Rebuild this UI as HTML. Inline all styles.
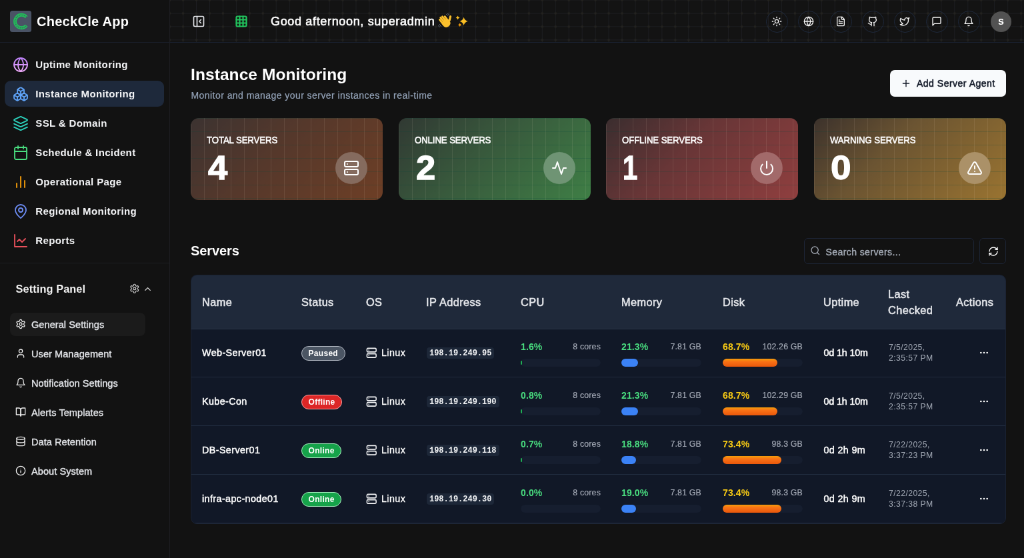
<!DOCTYPE html>
<html lang="en">
<head>
<meta charset="utf-8">
<title>CheckCle App - Instance Monitoring</title>
<style>
*{box-sizing:border-box;margin:0;padding:0}
html,body{width:1024px;height:558px;overflow:hidden;background:#121212}
body{font-family:"Liberation Sans",sans-serif;color:#fff;-webkit-font-smoothing:antialiased}
#app{position:absolute;left:0;top:0;width:1536px;height:837px;transform:scale(0.666667);transform-origin:0 0;will-change:transform;overflow:hidden}
svg{display:block;fill:none;stroke:currentColor;stroke-width:2;stroke-linecap:round;stroke-linejoin:round}
.abs{position:absolute}
/* ---------- sidebar ---------- */
#side{position:absolute;left:0;top:0;width:255px;height:837px;background:#121212;border-right:1px solid #1e1f23}
#side .head{position:absolute;left:0;top:0;width:254px;height:64px;border-bottom:1px solid #1a1f2a}
#logo{position:absolute;left:15px;top:16px;width:32px;height:32px;border-radius:3.5px;background:#4a5365;color:#22c55e}
#brand{position:absolute;left:55px;top:19.8px;font-size:20px;font-weight:700;line-height:24px;letter-spacing:.28px;white-space:nowrap}
.nav{position:absolute;left:6.8px;width:239.2px;height:39.5px;margin-top:.5px;border-radius:9px;white-space:nowrap}
.nav.on{background:#1e293b}
.nav svg{position:absolute;left:12px;top:8px;width:24px;height:24px;stroke-width:1.8}
.nav span{position:absolute;left:46.5px;top:8.8px;font-size:15px;line-height:24px;font-weight:700;letter-spacing:.36px;color:#f3f4f6}
#side .sep{position:absolute;left:0;top:394px;width:254px;height:1px;background:#1d1f24}
#sp{position:absolute;left:23.5px;top:421px;font-size:16.3px;line-height:24px;font-weight:700;letter-spacing:.12px;color:#f1f1f1}
.set{position:absolute;left:15px;width:203px;height:35px;border-radius:8px;white-space:nowrap;color:#e5e7eb}
.set.on{background:#1b1b1b}
.set svg{position:absolute;left:8.3px;top:9.3px;width:16px;height:16px;stroke-width:1.9;color:#f0f0f0}
.set span{position:absolute;left:32px;top:6.9px;font-size:14.5px;line-height:22px;font-weight:400;letter-spacing:.08px;-webkit-text-stroke:.35px currentColor}
/* ---------- header ---------- */
#top{position:absolute;left:255px;top:0;width:1281px;height:64px;border-bottom:1px solid #1b2230;
 background-color:#131313;
 background-image:radial-gradient(circle at 2.5px 2.5px,#24231f 1.2px,transparent 2.3px),linear-gradient(to right,#1d1e22 1px,transparent 1px),linear-gradient(to bottom,#1d1e22 1px,transparent 1px);
 background-size:19.96px 19.96px;background-position:-2.9px -2.5px,-.9px -.5px,-.9px -.5px}
#greet{position:absolute;left:151px;top:19px;font-size:18px;line-height:26px;font-weight:400;letter-spacing:.66px;white-space:nowrap;-webkit-text-stroke:.6px #fff}
.hb{position:absolute;top:15.5px;width:33px;height:33px;margin-left:-.5px;border-radius:50%;border:1px solid #1f2a3d;color:#f5f5f5}
.hb svg{position:absolute;left:7.5px;top:7.5px;width:16px;height:16px}
#ava{position:absolute;left:1231px;top:16.5px;width:31px;height:31px;border-radius:50%;background:#525252;text-align:center;font-size:16px;line-height:29px;font-weight:700}
/* ---------- main ---------- */
#title{position:absolute;left:286px;top:96.3px;font-size:24.5px;line-height:32px;font-weight:700;letter-spacing:.08px;white-space:nowrap}
#sub{position:absolute;left:286.5px;top:132.8px;font-size:14px;line-height:20px;color:#94a3b8;letter-spacing:.445px;-webkit-text-stroke:.2px #94a3b8;white-space:nowrap}
#add{position:absolute;left:1335px;top:105px;width:174px;height:40px;border-radius:7px;background:#f8fafc;color:#111827}
#add svg{position:absolute;left:16px;top:12px;width:16px;height:16px}
#add span{position:absolute;left:40px;top:9px;font-size:14px;line-height:22px;font-weight:400;-webkit-text-stroke:.55px #111827;letter-spacing:.5px;white-space:nowrap}
.card{position:absolute;top:177px;width:288px;height:123px;border-radius:12px;overflow:hidden}
.card:before{content:"";position:absolute;inset:0;
 background-image:linear-gradient(to right,rgba(255,235,210,.09) 1px,transparent 1px),linear-gradient(to bottom,rgba(0,70,60,.2) 1px,transparent 1px);
 background-size:20px 20px}
.card .lb{position:absolute;left:24px;top:22.7px;font-size:14.3px;line-height:20px;font-weight:400;letter-spacing:-.1px;white-space:nowrap;-webkit-text-stroke:.55px #fff;transform:scaleX(.923);transform-origin:0 0}
.card .num{position:absolute;left:25.5px;top:49.4px;font-size:50px;line-height:52px;font-weight:700;-webkit-text-stroke:1.3px #fff;transform:scaleX(1.05);transform-origin:0 0}
.card .ic{position:absolute;left:216.5px;top:50.8px;width:48px;height:48px;border-radius:50%;color:#fff}
.card .ic svg{position:absolute;left:12px;top:12px;width:24px;height:24px}
#sv{position:absolute;left:286px;top:361.8px;font-size:20px;line-height:28px;font-weight:700;letter-spacing:-.1px}
#search{position:absolute;left:1206px;top:357px;width:255px;height:39px;border:1px solid #1e2637;border-radius:6px;color:#9ca3af}
#search svg{position:absolute;left:7.5px;top:10px;width:15.5px;height:15.5px;color:#a7adb8}
#search span{position:absolute;left:31.5px;top:9.6px;font-size:14px;line-height:20px;letter-spacing:.42px;white-space:nowrap;color:#a9b0bb;-webkit-text-stroke:.35px #a9b0bb}
#refresh{position:absolute;left:1469px;top:357px;width:40px;height:39px;border:1px solid #1e2637;border-radius:6px}
#refresh svg{position:absolute;left:12px;top:11px;width:16px;height:16px}
/* ---------- table ---------- */
#tbl{position:absolute;left:286px;top:412px;width:1223px;height:373.5px;border-radius:9px;background:#111827;border:1px solid #1b2333;overflow:hidden}
#th{position:absolute;left:0;top:0;width:1223px;height:80.5px;background:#1f293a;border-bottom:1px solid #2a3549}
#th span{position:absolute;font-size:16.3px;line-height:24px;font-weight:400;color:#e5e7eb;letter-spacing:.42px;margin-top:.4px;-webkit-text-stroke:.55px #e5e7eb;white-space:nowrap}
.row{position:absolute;left:0;width:1223px;height:73px;border-bottom:1px solid #222d40}
.row>*{position:absolute;white-space:nowrap}
.nm{left:16px;top:25.6px;font-size:14.3px;line-height:20px;-webkit-text-stroke:.5px #fff;letter-spacing:.42px}
.bd{left:165px;top:25.9px;height:22px;border-radius:11px;font-size:12px;line-height:20.7px;font-weight:700;padding:0 9.5px;border:1.5px solid rgba(255,255,255,.55);letter-spacing:.3px}
.bd.p{background:#4b5563;border-color:#b4bac4}
.bd.f{background:#dc2626;border-color:#f9a3a3}
.bd.o{background:#16a34a;border-color:#a3edbd}
.os{left:261.5px;top:27.9px;width:16.5px;height:16.5px;color:#f3f4f6;stroke-width:2.2}
.osn{left:285px;top:26.1px;font-size:14.3px;line-height:20px;letter-spacing:.4px;-webkit-text-stroke:.3px #fff}
.ip{left:353px;top:28.1px;height:17px;padding:0 4px;border-radius:4px;background:#1d2738;font-family:"Liberation Mono","DejaVu Sans Mono",monospace;font-size:12px;line-height:19px;font-weight:700;color:#f3f4f6;letter-spacing:-.02px}
.pc{top:16.8px;font-size:14px;line-height:20px;font-weight:700;letter-spacing:.1px}
.g{color:#4ade80}.y{color:#facc15}
.sm{top:18.8px;font-size:12.3px;line-height:16px;color:#a3a9b5;text-align:right;letter-spacing:.2px;-webkit-text-stroke:.2px #a3a9b5}
.bar{top:44.6px;width:120px;height:12px;border-radius:6px;background:#161e2f}
.bar i{position:absolute;left:0;top:0;height:12px;border-radius:6px;display:block}
.bar i.c{background:#1fae55;height:6px;top:3px;border-radius:1px}
.bar i.m{background:#3b82f6}
.bar i.d{background:linear-gradient(to bottom,#f59e0b 0,#f97316 35%,#ea580c 100%)}
.up{left:948.5px;top:25.6px;font-size:14.3px;line-height:20px;-webkit-text-stroke:.5px #fff;letter-spacing:.38px}
.lc{left:1046px;top:19.8px;font-size:12.2px;line-height:16px;color:#a3aab6;letter-spacing:.42px}
.dots{left:1181px;top:28.2px;width:16px;height:16px;color:#fff}
</style>
</head>
<body>
<div id="app">

<!-- SIDEBAR -->
<div id="side">
  <div class="head">
    <div id="logo"><svg viewBox="0 0 32 32" width="32" height="32" style="stroke-linecap:butt"><path d="M24.670 9.730A9.750 9.750 0 1 0 24.670 22.270" style="stroke:#22c05a;stroke-width:4.800"/><path d="M24.670 9.730A9.750 9.750 0 1 0 24.670 22.270" style="stroke:#3d6461;stroke-width:1.700;stroke-dasharray:1.500 1.300"/></svg></div>
    <div id="brand">CheckCle App</div>
  </div>

  <div class="nav" style="top:76px"><svg viewBox="0 0 24 24" style="stroke:url(#gp)"><defs><linearGradient id="gp" gradientUnits="userSpaceOnUse" x1="0" y1="2" x2="0" y2="22"><stop offset="0" stop-color="#c084fc"/><stop offset="1" stop-color="#f0abfc"/></linearGradient></defs><circle cx="12" cy="12" r="10"/><path d="M12 2a14.5 14.5 0 0 0 0 20 14.5 14.5 0 0 0 0-20"/><path d="M2 12h20"/></svg><span>Uptime Monitoring</span></div>
  <div class="nav on" style="top:120px"><svg viewBox="0 0 24 24" style="color:#60a5fa"><path d="M2.970 12.920A2 2 0 0 0 2 14.630v3.240a2 2 0 0 0 .970 1.710l3 1.800a2 2 0 0 0 2.060 0L12 19v-5.500l-5-3-4.030 2.420Z"/><path d="m7 16.500-4.740-2.850"/><path d="m7 16.500 5-3"/><path d="M7 16.500v5.170"/><path d="M12 13.500V19l3.970 2.380a2 2 0 0 0 2.060 0l3-1.800a2 2 0 0 0 .970-1.710v-3.240a2 2 0 0 0-.970-1.710L17 10.500l-5 3Z"/><path d="m17 16.500-5-3"/><path d="m17 16.500 4.740-2.850"/><path d="M17 16.500v5.170"/><path d="M7.970 4.420A2 2 0 0 0 7 6.130v4.370l5 3 5-3V6.130a2 2 0 0 0-.970-1.710l-3-1.800a2 2 0 0 0-2.060 0l-3 1.800Z"/><path d="M12 8 7.260 5.150"/><path d="m12 8 4.740-2.850"/><path d="M12 13.500V8"/></svg><span>Instance Monitoring</span></div>
  <div class="nav" style="top:164px"><svg viewBox="0 0 24 24" style="color:#2dd4bf"><path d="m12.830 2.180a2 2 0 0 0-1.660 0L2.600 6.080a1 1 0 0 0 0 1.830l8.580 3.910a2 2 0 0 0 1.660 0l8.580-3.900a1 1 0 0 0 0-1.830Z"/><path d="m22 17.650-9.170 4.160a2 2 0 0 1-1.660 0L2 17.650"/><path d="m22 12.650-9.170 4.160a2 2 0 0 1-1.660 0L2 12.650"/></svg><span>SSL &amp; Domain</span></div>
  <div class="nav" style="top:208px"><svg viewBox="0 0 24 24" style="color:#4ade80"><path d="M8 2v4"/><path d="M16 2v4"/><rect width="18" height="18" x="3" y="4" rx="2"/><path d="M3 10h18"/></svg><span>Schedule &amp; Incident</span></div>
  <div class="nav" style="top:252px"><svg viewBox="0 0 24 24" style="color:#f59e0b"><path d="M18 20V10"/><path d="M12 20V4"/><path d="M6 20v-6"/></svg><span>Operational Page</span></div>
  <div class="nav" style="top:296px"><svg viewBox="0 0 24 24" style="color:#6d8df5"><path d="M20 10c0 6-8 12-8 12s-8-6-8-12a8 8 0 0 1 16 0Z"/><circle cx="12" cy="10" r="3"/></svg><span>Regional Monitoring</span></div>
  <div class="nav" style="top:340px"><svg viewBox="0 0 24 24" style="color:#e8505b"><path d="M3 3v18h18"/><path d="m19 9-5 5-4-4-3 3"/></svg><span>Reports</span></div>
  <div class="sep"></div>
  <div id="sp">Setting Panel</div>
  <svg class="abs" viewBox="0 0 24 24" style="left:193.500px;top:425px;width:15.500px;height:15.500px;color:#d4d4d4;stroke-width:1.800"><path d="M12.220 2h-.440a2 2 0 0 0-2 2v.180a2 2 0 0 1-1 1.730l-.430.250a2 2 0 0 1-2 0l-.150-.080a2 2 0 0 0-2.730.730l-.220.380a2 2 0 0 0 .730 2.730l.150.100a2 2 0 0 1 1 1.720v.510a2 2 0 0 1-1 1.740l-.150.090a2 2 0 0 0-.730 2.730l.220.380a2 2 0 0 0 2.730.730l.150-.080a2 2 0 0 1 2 0l.430.250a2 2 0 0 1 1 1.730V20a2 2 0 0 0 2 2h.440a2 2 0 0 0 2-2v-.180a2 2 0 0 1 1-1.730l.430-.250a2 2 0 0 1 2 0l.150.080a2 2 0 0 0 2.730-.730l.220-.390a2 2 0 0 0-.730-2.730l-.150-.080a2 2 0 0 1-1-1.740v-.500a2 2 0 0 1 1-1.740l.150-.090a2 2 0 0 0 .730-2.730l-.220-.380a2 2 0 0 0-2.730-.730l-.150.080a2 2 0 0 1-2 0l-.430-.250a2 2 0 0 1-1-1.730V4a2 2 0 0 0-2-2z"/><circle cx="12" cy="12" r="3"/></svg>
  <svg class="abs" viewBox="0 0 24 24" style="left:214px;top:426px;width:15px;height:15px;color:#e5e5e5"><path d="m18 15-6-6-6 6"/></svg>
  <div class="set on" style="top:469px"><svg viewBox="0 0 24 24"><path d="M12.220 2h-.440a2 2 0 0 0-2 2v.180a2 2 0 0 1-1 1.730l-.430.250a2 2 0 0 1-2 0l-.150-.080a2 2 0 0 0-2.730.730l-.220.380a2 2 0 0 0 .730 2.730l.150.100a2 2 0 0 1 1 1.720v.510a2 2 0 0 1-1 1.740l-.150.090a2 2 0 0 0-.730 2.730l.220.380a2 2 0 0 0 2.730.730l.150-.080a2 2 0 0 1 2 0l.430.250a2 2 0 0 1 1 1.730V20a2 2 0 0 0 2 2h.440a2 2 0 0 0 2-2v-.180a2 2 0 0 1 1-1.730l.430-.250a2 2 0 0 1 2 0l.150.080a2 2 0 0 0 2.730-.730l.220-.390a2 2 0 0 0-.730-2.730l-.150-.080a2 2 0 0 1-1-1.740v-.500a2 2 0 0 1 1-1.740l.150-.090a2 2 0 0 0 .730-2.730l-.220-.380a2 2 0 0 0-2.730-.730l-.150.080a2 2 0 0 1-2 0l-.430-.250a2 2 0 0 1-1-1.730V4a2 2 0 0 0-2-2z"/><circle cx="12" cy="12" r="3"/></svg><span>General Settings</span></div>
  <div class="set" style="top:513px"><svg viewBox="0 0 24 24"><path d="M19 21v-2a4 4 0 0 0-4-4H9a4 4 0 0 0-4 4v2"/><circle cx="12" cy="7" r="4"/></svg><span>User Management</span></div>
  <div class="set" style="top:557px"><svg viewBox="0 0 24 24"><path d="M6 8a6 6 0 0 1 12 0c0 7 3 9 3 9H3s3-2 3-9"/><path d="M10.300 21a1.940 1.940 0 0 0 3.400 0"/></svg><span>Notification Settings</span></div>
  <div class="set" style="top:601px"><svg viewBox="0 0 24 24"><path d="M2 3h6a4 4 0 0 1 4 4v14a3 3 0 0 0-3-3H2z"/><path d="M22 3h-6a4 4 0 0 0-4 4v14a3 3 0 0 1 3-3h7z"/></svg><span>Alerts Templates</span></div>
  <div class="set" style="top:645px"><svg viewBox="0 0 24 24"><ellipse cx="12" cy="5" rx="9" ry="3"/><path d="M3 5V19A9 3 0 0 0 21 19V5"/><path d="M3 12A9 3 0 0 0 21 12"/></svg><span>Data Retention</span></div>
  <div class="set" style="top:689px"><svg viewBox="0 0 24 24"><circle cx="12" cy="12" r="10"/><path d="M12 16v-4"/><path d="M12 8h.01"/></svg><span>About System</span></div>
</div>

<!-- HEADER -->
<div id="top">

  <svg class="abs" viewBox="0 0 24 24" style="left:33.200px;top:22px;width:20px;height:20px;color:#e5e7eb"><rect width="18" height="18" x="3" y="3" rx="2"/><path d="M9 3v18"/><path d="m16 15-3-3 3-3"/></svg>
  <svg class="abs" viewBox="0 0 24 24" style="left:96.800px;top:22px;width:20px;height:20px;color:#22c55e;stroke-width:2.600"><rect width="18" height="18" x="3" y="3" rx="2"/><path d="M3 9h18"/><path d="M3 15h18"/><path d="M9 3v18"/><path d="M15 3v18"/></svg>
  <div id="greet">Good afternoon, superadmin</div>
  <svg class="abs" viewBox="0 0 24 24" style="left:401px;top:20px;width:24px;height:24px;stroke:none"><g transform="rotate(-38 12 13)" fill="#fbc02d"><rect x="6" y="9.500" width="12" height="11.500" rx="5"/><rect x="6" y="3.500" width="2.900" height="11" rx="1.450"/><rect x="9" y="1.800" width="2.900" height="12" rx="1.450"/><rect x="12" y="2.300" width="2.900" height="12" rx="1.450"/><rect x="15" y="4.500" width="2.900" height="10" rx="1.450"/><rect x="16.500" y="7" width="3.200" height="9" rx="1.600" transform="rotate(52 18 15)"/></g><path d="M3.500 16.500l2 3.200M1.800 18.500l1.300 2.200M13.500 1.500l2.500 1.800M15.500 .5l1.800 1.300" stroke="#6b7280" stroke-width="1" fill="none"/></svg>
  <svg class="abs" viewBox="0 0 24 24" style="left:428px;top:21px;width:20px;height:20px;stroke:none;fill:#fbbf24"><path d="M15.10 5.60Q16.73 11.37 22.50 13.00Q16.73 14.63 15.10 20.40Q13.47 14.63 7.70 13.00Q13.47 11.37 15.10 5.60Z"/><path d="M4.30 3.10Q5.09 5.91 7.90 6.70Q5.09 7.49 4.30 10.30Q3.51 7.49 0.70 6.70Q3.51 5.91 4.30 3.10Z"/><path d="M8.00 16.10Q8.73 18.67 11.30 19.40Q8.73 20.13 8.00 22.70Q7.27 20.13 4.70 19.40Q7.27 18.67 8.00 16.10Z" fill="#f59e0b"/></svg>
  <div class="hb" style="left:894px"><svg viewBox="0 0 24 24"><circle cx="12" cy="12" r="4"/><path d="M12 2v2"/><path d="M12 20v2"/><path d="m4.930 4.930 1.410 1.410"/><path d="m17.660 17.660 1.410 1.410"/><path d="M2 12h2"/><path d="M20 12h2"/><path d="m6.340 17.660-1.410 1.410"/><path d="m19.070 4.930-1.410 1.410"/></svg></div>
  <div class="hb" style="left:942px"><svg viewBox="0 0 24 24"><circle cx="12" cy="12" r="10"/><path d="M12 2a14.500 14.500 0 0 0 0 20 14.500 14.500 0 0 0 0-20"/><path d="M2 12h20"/></svg></div>
  <div class="hb" style="left:990px"><svg viewBox="0 0 24 24"><path d="M15 2H6a2 2 0 0 0-2 2v16a2 2 0 0 0 2 2h12a2 2 0 0 0 2-2V7Z"/><path d="M14 2v4a2 2 0 0 0 2 2h4"/><path d="M10 9H8"/><path d="M16 13H8"/><path d="M16 17H8"/></svg></div>
  <div class="hb" style="left:1038px"><svg viewBox="0 0 24 24"><path d="M15 22v-4a4.800 4.800 0 0 0-1-3.500c3 0 6-2 6-5.500.080-1.250-.270-2.480-1-3.500.280-1.150.280-2.350 0-3.500 0 0-1 0-3 1.500-2.640-.5-5.360-.5-8 0C6 2 5 2 5 2c-.3 1.150-.3 2.350 0 3.500A5.403 5.403 0 0 0 4 9c0 3.500 3 5.500 6 5.500-.390.490-.680 1.050-.850 1.650-.170.600-.220 1.230-.150 1.850v4"/><path d="M9 18c-4.510 2-5-2-7-2"/></svg></div>
  <div class="hb" style="left:1086px"><svg viewBox="0 0 24 24"><path d="M22 4s-.7 2.100-2 3.400c1.600 10-9.400 17.300-18 11.600 2.200.1 4.400-.6 6-2C3 15.500.5 9.600 3 5c2.200 2.600 5.600 4.100 9 4-.9-4.200 4-6.600 7-3.800 1.100 0 3-1.200 3-1.200z"/></svg></div>
  <div class="hb" style="left:1134px"><svg viewBox="0 0 24 24"><path d="M21 15a2 2 0 0 1-2 2H7l-4 4V5a2 2 0 0 1 2-2h14a2 2 0 0 1 2 2z"/></svg></div>
  <div class="hb" style="left:1182px"><svg viewBox="0 0 24 24"><path d="M6 8a6 6 0 0 1 12 0c0 7 3 9 3 9H3s3-2 3-9"/><path d="M10.300 21a1.940 1.940 0 0 0 3.400 0"/></svg></div>
  <div id="ava">s</div>
</div>

<div id="title">Instance Monitoring</div>
<div id="sub">Monitor and manage your server instances in real-time</div>
<div id="add"><svg viewBox="0 0 24 24"><path d="M5 12h14"/><path d="M12 5v14"/></svg><span>Add Server Agent</span></div>


<div class="card" style="left:286px;background:linear-gradient(135deg,#3c3331 0%,#54382c 40%,#6e3f26 100%)"><div class="lb">TOTAL SERVERS</div><div class="num">4</div><div class="ic" style="background:#856b5e"><svg viewBox="0 0 24 24"><rect width="20" height="8" x="2" y="2" rx="2" ry="2"/><rect width="20" height="8" x="2" y="14" rx="2" ry="2"/><line x1="6" x2="6.010" y1="6" y2="6"/><line x1="6" x2="6.010" y1="18" y2="18"/></svg></div></div>
<div class="card" style="left:598px;background:linear-gradient(135deg,#313933 0%,#38573c 40%,#3f7f46 100%)"><div class="lb">ONLINE SERVERS</div><div class="num">2</div><div class="ic" style="background:#6f9474"><svg viewBox="0 0 24 24"><path d="M22 12h-4l-3 9L9 3l-3 9H2"/></svg></div></div>
<div class="card" style="left:909px;background:linear-gradient(135deg,#3b2e2f 0%,#683637 40%,#903f3f 100%)"><div class="lb">OFFLINE SERVERS</div><div class="num" style="left:24.5px;transform:scaleX(.8)">1</div><div class="ic" style="background:#a26a6a"><svg viewBox="0 0 24 24"><path d="M12 2v10"/><path d="M18.400 6.600a9 9 0 1 1-12.770.040"/></svg></div></div>
<div class="card" style="left:1221px;background:linear-gradient(135deg,#3c322c 0%,#6b5432 38%,#9a7431 100%)"><div class="lb">WARNING SERVERS</div><div class="num" style="left:24.500px;transform:scaleX(1.1)">0</div><div class="ic" style="background:#ab9168"><svg viewBox="0 0 24 24"><path d="m21.730 18-8-14a2 2 0 0 0-3.480 0l-8 14A2 2 0 0 0 4 21h16a2 2 0 0 0 1.730-3Z"/><path d="M12 9v4"/><path d="M12 17h.01"/></svg></div></div>

<div id="sv">Servers</div>
<div id="search"><svg viewBox="0 0 24 24"><circle cx="11" cy="11" r="8"/><path d="m21 21-4.3-4.3"/></svg><span>Search servers...</span></div>
<div id="refresh"><svg viewBox="0 0 24 24"><path d="M3 12a9 9 0 0 1 9-9 9.75 9.75 0 0 1 6.74 2.74L21 8"/><path d="M21 3v5h-5"/><path d="M21 12a9 9 0 0 1-9 9 9.75 9.750 0 0 1-6.740-2.740L3 16"/><path d="M8 16H3v5"/></svg></div>

<div id="tbl">
  <div id="th"><span style="left:16px;top:28px">Name</span><span style="left:165px;top:28px">Status</span><span style="left:262px;top:28px">OS</span><span style="left:352px;top:28px">IP Address</span><span style="left:494px;top:28px">CPU</span><span style="left:645px;top:28px">Memory</span><span style="left:797px;top:28px">Disk</span><span style="left:948px;top:28px">Uptime</span><span style="left:1045px;top:16px">Last<br>Checked</span><span style="left:1147px;top:28px">Actions</span></div>
<div class="row" style="top:80px"><span class="nm">Web-Server01</span><span class="bd p">Paused</span><svg class="os" viewBox="0 0 24 24"><rect width="20" height="8" x="2" y="2" rx="2" ry="2"/><rect width="20" height="8" x="2" y="14" rx="2" ry="2"/><line x1="6" x2="6.010" y1="6" y2="6"/><line x1="6" x2="6.010" y1="18" y2="18"/></svg><span class="osn">Linux</span><span class="ip">198.19.249.95</span>
 <span class="pc g" style="left:494px">1.6%</span><span class="sm" style="left:534px;width:80px">8 cores</span><span class="bar" style="left:494px"><i class="c" style="width:2px"></i></span>
 <span class="pc g" style="left:645px">21.3%</span><span class="sm" style="left:685px;width:80px">7.81 GB</span><span class="bar" style="left:645px"><i class="m" style="width:25px"></i></span>
 <span class="pc y" style="left:797px">68.7%</span><span class="sm" style="left:837px;width:80px">102.26 GB</span><span class="bar" style="left:797px"><i class="d" style="width:82px"></i></span>
 <span class="up" style="letter-spacing:-.25px;word-spacing:.4px">0d 1h 10m</span><span class="lc">7/5/2025,<br>2:35:57 PM</span><svg class="dots" viewBox="0 0 24 24"><circle cx="12" cy="12" r="1"/><circle cx="19" cy="12" r="1"/><circle cx="5" cy="12" r="1"/></svg></div>
<div class="row" style="top:153px"><span class="nm">Kube-Con</span><span class="bd f">Offline</span><svg class="os" viewBox="0 0 24 24"><rect width="20" height="8" x="2" y="2" rx="2" ry="2"/><rect width="20" height="8" x="2" y="14" rx="2" ry="2"/><line x1="6" x2="6.010" y1="6" y2="6"/><line x1="6" x2="6.010" y1="18" y2="18"/></svg><span class="osn">Linux</span><span class="ip">198.19.249.190</span>
 <span class="pc g" style="left:494px">0.8%</span><span class="sm" style="left:534px;width:80px">8 cores</span><span class="bar" style="left:494px"><i class="c" style="width:2px"></i></span>
 <span class="pc g" style="left:645px">21.3%</span><span class="sm" style="left:685px;width:80px">7.81 GB</span><span class="bar" style="left:645px"><i class="m" style="width:25px"></i></span>
 <span class="pc y" style="left:797px">68.7%</span><span class="sm" style="left:837px;width:80px">102.29 GB</span><span class="bar" style="left:797px"><i class="d" style="width:82px"></i></span>
 <span class="up" style="letter-spacing:-.25px;word-spacing:.4px">0d 1h 10m</span><span class="lc">7/5/2025,<br>2:35:57 PM</span><svg class="dots" viewBox="0 0 24 24"><circle cx="12" cy="12" r="1"/><circle cx="19" cy="12" r="1"/><circle cx="5" cy="12" r="1"/></svg></div>
<div class="row" style="top:226px"><span class="nm">DB-Server01</span><span class="bd o">Online</span><svg class="os" viewBox="0 0 24 24"><rect width="20" height="8" x="2" y="2" rx="2" ry="2"/><rect width="20" height="8" x="2" y="14" rx="2" ry="2"/><line x1="6" x2="6.010" y1="6" y2="6"/><line x1="6" x2="6.010" y1="18" y2="18"/></svg><span class="osn">Linux</span><span class="ip">198.19.249.118</span>
 <span class="pc g" style="left:494px">0.7%</span><span class="sm" style="left:534px;width:80px">8 cores</span><span class="bar" style="left:494px"><i class="c" style="width:2px"></i></span>
 <span class="pc g" style="left:645px">18.8%</span><span class="sm" style="left:685px;width:80px">7.81 GB</span><span class="bar" style="left:645px"><i class="m" style="width:22px"></i></span>
 <span class="pc y" style="left:797px">73.4%</span><span class="sm" style="left:837px;width:80px">98.3 GB</span><span class="bar" style="left:797px"><i class="d" style="width:88px"></i></span>
 <span class="up">0d 2h 9m</span><span class="lc">7/22/2025,<br>3:37:23 PM</span><svg class="dots" viewBox="0 0 24 24"><circle cx="12" cy="12" r="1"/><circle cx="19" cy="12" r="1"/><circle cx="5" cy="12" r="1"/></svg></div>
<div class="row" style="top:299px"><span class="nm">infra-apc-node01</span><span class="bd o">Online</span><svg class="os" viewBox="0 0 24 24"><rect width="20" height="8" x="2" y="2" rx="2" ry="2"/><rect width="20" height="8" x="2" y="14" rx="2" ry="2"/><line x1="6" x2="6.010" y1="6" y2="6"/><line x1="6" x2="6.010" y1="18" y2="18"/></svg><span class="osn">Linux</span><span class="ip">198.19.249.30</span>
 <span class="pc g" style="left:494px">0.0%</span><span class="sm" style="left:534px;width:80px">8 cores</span><span class="bar" style="left:494px"></span>
 <span class="pc g" style="left:645px">19.0%</span><span class="sm" style="left:685px;width:80px">7.81 GB</span><span class="bar" style="left:645px"><i class="m" style="width:22px"></i></span>
 <span class="pc y" style="left:797px">73.4%</span><span class="sm" style="left:837px;width:80px">98.3 GB</span><span class="bar" style="left:797px"><i class="d" style="width:88px"></i></span>
 <span class="up">0d 2h 9m</span><span class="lc">7/22/2025,<br>3:37:38 PM</span><svg class="dots" viewBox="0 0 24 24"><circle cx="12" cy="12" r="1"/><circle cx="19" cy="12" r="1"/><circle cx="5" cy="12" r="1"/></svg></div>
</div>

</div>
</body>
</html>
